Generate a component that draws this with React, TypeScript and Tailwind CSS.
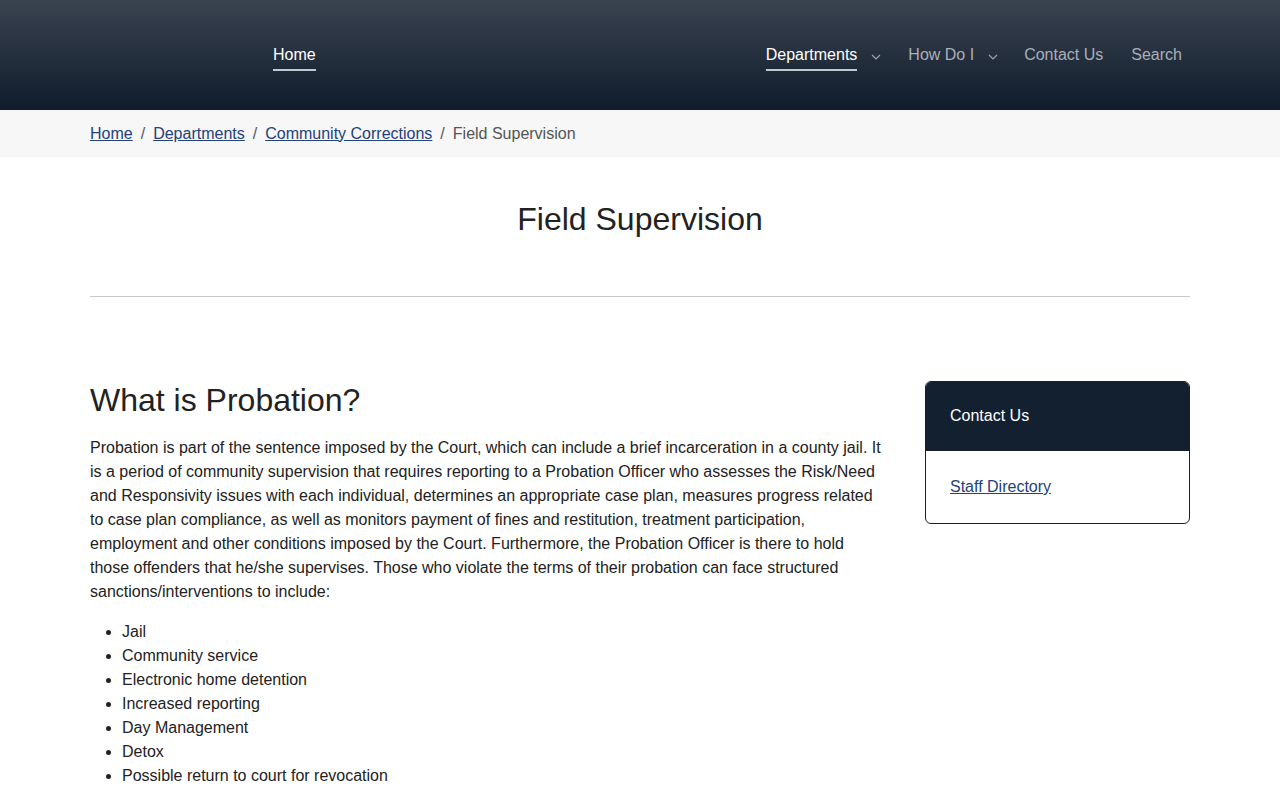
import React from 'react';

const Chevron: React.FC = () => (
    <svg width="10" height="6" viewBox="0 0 10 6" fill="none" className="ml-[14px] mt-[11px]">
        <path d="M1 1l4 4 4-4" stroke="#9ca3af" strokeWidth="1.2" />
    </svg>
);

const sanctions = [
    'Jail',
    'Community service',
    'Electronic home detention',
    'Increased reporting',
    'Day Management',
    'Detox',
    'Possible return to court for revocation',
];

const App: React.FC = () => {
    return (
        <div className="min-h-screen bg-white text-[#222] font-['Liberation_Sans',Arial,sans-serif]">
            <header className="h-[110px] bg-gradient-to-b from-[#3a4350] to-[#111d2c]">
                <nav className="flex items-start pt-[43px]">
                    <a className="ml-[273px] text-white border-b-2 border-[#c3c9d1] pb-[2px]">Home</a>
                    <div className="ml-auto mr-[98px] flex items-start">
                        <div className="flex items-start">
                            <a className="text-white border-b-2 border-[#c3c9d1] pb-[2px]">Departments</a>
                            <Chevron />
                        </div>
                        <div className="flex items-start ml-[27px]">
                            <a className="text-[#a8b0ba]">How Do I</a>
                            <Chevron />
                        </div>
                        <a className="text-[#a8b0ba] ml-[26px]">Contact Us</a>
                        <a className="text-[#a8b0ba] ml-[28px]">Search</a>
                    </div>
                </nav>
            </header>

            <div className="bg-[#f7f7f7] h-[47px] flex items-center">
                <ol className="ml-[90px] flex items-center text-[#444] text-base">
                    <li><a className="text-[#23417a] underline">Home</a></li>
                    <li className="mx-2 text-[#555]">/</li>
                    <li><a className="text-[#23417a] underline">Departments</a></li>
                    <li className="mx-2 text-[#555]">/</li>
                    <li><a className="text-[#23417a] underline">Community Corrections</a></li>
                    <li className="mx-2 text-[#555]">/</li>
                    <li className="text-[#555]">Field Supervision</li>
                </ol>
            </div>

            <main className="mx-[90px]">
                <h1 className="text-[32px] leading-[40px] text-center pt-[42px] pb-[57px] text-[#222]">Field Supervision</h1>
                <hr className="border-0 border-t border-[#c8c8c8]" />

                <div className="grid grid-cols-[1fr_265px] gap-10 pt-[85px]">
                    <div>
                        <h2 className="text-[32px] leading-[36px] text-[#222]">What is Probation?</h2>
                        <p className="mt-[18px] text-base leading-6 text-[#222]">
                            Probation is part of the sentence imposed by the Court, which can include a brief incarceration in a county jail. It is a period of community supervision that requires reporting to a Probation Officer who assesses the Risk/Need and Responsivity issues with each individual, determines an appropriate case plan, measures progress related to case plan compliance, as well as monitors payment of fines and restitution, treatment participation, employment and other conditions imposed by the Court. Furthermore, the Probation Officer is there to hold those offenders that he/she supervises. Those who violate the terms of their probation can face structured sanctions/interventions to include:
                        </p>
                        <ul className="mt-4 list-disc pl-8 text-base leading-6 text-[#222]">
                            {sanctions.map(item => (
                                <li key={item}>{item}</li>
                            ))}
                        </ul>
                    </div>

                    <aside className="-mt-[1px]">
                        <div className="border border-[#1a1f26] rounded-[6px] overflow-hidden">
                            <div className="bg-[#132030] h-[68px] flex items-center px-6 text-white">Contact Us</div>
                            <div className="px-6 pt-6 pb-6 border-t border-[#1a1f26]">
                                <a className="text-[#23417a] underline">Staff Directory</a>
                            </div>
                        </div>
                    </aside>
                </div>
            </main>
        </div>
    );
};

export default App;
